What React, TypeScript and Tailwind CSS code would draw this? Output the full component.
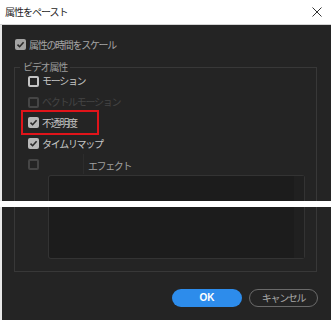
import React from "react";

function Check({ state }: { state: "checked" | "off" | "disabled" | "checkedDim" }) {
  if (state === "checked" || state === "checkedDim") {
    return (
      <div
        className={
          "w-[11px] h-[11px] rounded-[2px] flex items-center justify-center shrink-0 " +
          (state === "checked" ? "bg-[#b8b8b8]" : "bg-[#a4a4a4]")
        }
      >
        <svg width="9" height="9" viewBox="0 0 9 9">
          <path d="M1.5 4.6 L3.6 6.7 L7.6 2.2" fill="none" stroke="#2a2a2a" strokeWidth="1.6" />
        </svg>
      </div>
    );
  }
  return (
    <div
      className={
        "w-[11px] h-[11px] rounded-[2px] border-2 shrink-0 " +
        (state === "off" ? "border-[#c4c4c4]" : "border-[#454545]")
      }
    />
  );
}

function Row({ state, label, color }: { state: "checked" | "off" | "disabled"; label: string; color: string }) {
  return (
    <div className="h-[20.75px] flex items-center">
      <Check state={state} />
      <span className={"ml-[3px] text-[10px] tracking-[-1.3px] leading-none " + color}>{label}</span>
    </div>
  );
}

export default function App() {
  return (
    <div className="w-[331px] h-[320px] bg-white flex flex-col font-['Noto_Sans_CJK_JP','Noto_Sans',sans-serif] overflow-hidden">
      {/* top part */}
      <div className="h-[201px] flex flex-col overflow-hidden shrink-0">
        <div className="h-[25px] bg-white border-b border-[#d4d4d4] flex items-center justify-between pl-[5px] pr-[9px] shrink-0">
          <span className="text-[10px] tracking-[-1px] text-[#1e1e1e] leading-none">属性をペースト</span>
          <svg width="10" height="10" viewBox="0 0 10 10">
            <path d="M0.5 0.5 L9.5 9.5 M9.5 0.5 L0.5 9.5" stroke="#333" strokeWidth="1" />
          </svg>
        </div>
        <div className="flex-1 bg-[#242424] flex flex-col pt-[14px] border-l-2 border-[#e8e8e8]">
          <div className="flex items-center pl-[13px]">
            <Check state="checkedDim" />
            <span className="ml-[3px] text-[10px] tracking-[-1.3px] leading-none text-[#a6a6a6]">属性の時間をスケール</span>
          </div>
          <div className="relative mt-[17px] ml-[12px] w-[303px] flex-1 border-t border-l border-r border-[#383838] flex flex-col pt-[3px] pl-[13px]">
            <span className="absolute left-[5px] top-[-7px] px-[3px] bg-[#242424] text-[10px] tracking-[-1.2px] leading-[12px] text-[#9c9c9c]">
              ビデオ属性
            </span>
            <Row state="off" label="モーション" color="text-[#c6c6c6]" />
            <Row state="disabled" label="ベクトルモーション" color="text-[#444444]" />
            <div className="relative">
              <Row state="checked" label="不透明度" color="text-[#c6c6c6]" />
              <div className="absolute left-[-7px] top-[-3px] w-[78px] h-[25px] border-2 border-[#e0141a]" />
            </div>
            <Row state="checked" label="タイムリマップ" color="text-[#c6c6c6]" />
            <div className="h-[20.75px] flex items-center">
              <Check state="disabled" />
              <div className="ml-[44px] w-px h-[20px] bg-[#2c2c2c] self-start" />
              <span className="ml-[4px] mt-[3px] text-[10px] tracking-[-1.4px] leading-none text-[#a0a0a0]">エフェクト</span>
            </div>
            <div className="ml-[20px] w-[257px] flex-1 bg-[#1c1c1c] border-t border-l border-r border-[#333333] rounded-t-[3px] flex justify-end">
              <div className="w-[10px] bg-[#202020]" />
            </div>
          </div>
        </div>
      </div>
      {/* white gap */}
      <div className="h-[6px] bg-white shrink-0" />
      {/* bottom part */}
      <div className="flex-1 bg-[#242424] flex flex-col border-l-2 border-[#e8e8e8]">
        <div className="ml-[12px] w-[303px] h-[65px] border-l border-r border-b border-[#383838] flex flex-col pl-[33px] shrink-0">
          <div className="w-[257px] h-[52px] bg-[#1c1c1c] border-l border-r border-b border-[#333333] rounded-b-[3px] flex justify-end">
            <div className="w-[10px] bg-[#202020]" />
          </div>
        </div>
        <div className="mt-[17px] flex justify-end gap-[7px] pr-[13px]">
          <div className="w-[70px] h-[18px] rounded-full bg-[#2d8ceb] flex items-center justify-center">
            <span className="text-[10px] font-bold text-white leading-none font-['Liberation_Sans',sans-serif]">OK</span>
          </div>
          <div className="w-[69px] h-[18px] rounded-full border-[1.5px] border-[#6a6a6a] flex items-center justify-center">
            <span className="text-[10px] tracking-[-1.3px] text-[#a8a8a8] leading-none">キャンセル</span>
          </div>
        </div>
      </div>
    </div>
  );
}
